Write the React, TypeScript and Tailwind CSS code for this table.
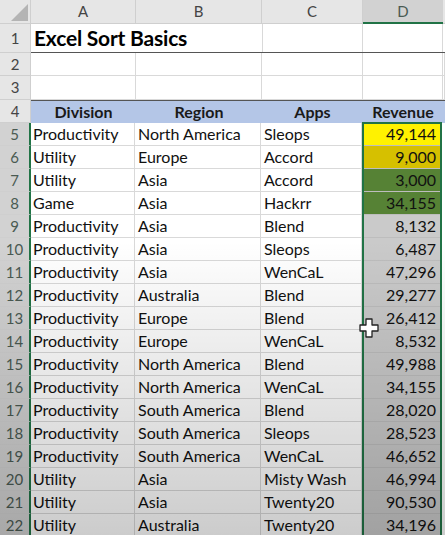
import React from 'react';

const FONT = { fontFamily: 'Lato, "Open Sans", "Liberation Sans", sans-serif' };

interface DataRow {
  division: string;
  region: string;
  app: string;
  revenue: string;
  fill: string;
}

const rows: DataRow[] = [
  { division: 'Productivity', region: 'North America', app: 'Sleops', revenue: '49,144', fill: 'bg-[#fff200]' },
  { division: 'Utility', region: 'Europe', app: 'Accord', revenue: '9,000', fill: 'bg-[#d6c000]' },
  { division: 'Utility', region: 'Asia', app: 'Accord', revenue: '3,000', fill: 'bg-[#568235]' },
  { division: 'Game', region: 'Asia', app: 'Hackrr', revenue: '34,155', fill: 'bg-[#568235]' },
  { division: 'Productivity', region: 'Asia', app: 'Blend', revenue: '8,132', fill: 'bg-[#cacaca]' },
  { division: 'Productivity', region: 'Asia', app: 'Sleops', revenue: '6,487', fill: 'bg-[#cacaca]' },
  { division: 'Productivity', region: 'Asia', app: 'WenCaL', revenue: '47,296', fill: 'bg-[#cacaca]' },
  { division: 'Productivity', region: 'Australia', app: 'Blend', revenue: '29,277', fill: 'bg-[#cacaca]' },
  { division: 'Productivity', region: 'Europe', app: 'Blend', revenue: '26,412', fill: 'bg-[#cacaca]' },
  { division: 'Productivity', region: 'Europe', app: 'WenCaL', revenue: '8,532', fill: 'bg-[#cacaca]' },
  { division: 'Productivity', region: 'North America', app: 'Blend', revenue: '49,988', fill: 'bg-[#cacaca]' },
  { division: 'Productivity', region: 'North America', app: 'WenCaL', revenue: '34,155', fill: 'bg-[#cacaca]' },
  { division: 'Productivity', region: 'South America', app: 'Blend', revenue: '28,020', fill: 'bg-[#cacaca]' },
  { division: 'Productivity', region: 'South America', app: 'Sleops', revenue: '28,523', fill: 'bg-[#cacaca]' },
  { division: 'Productivity', region: 'South America', app: 'WenCaL', revenue: '46,652', fill: 'bg-[#cacaca]' },
  { division: 'Utility', region: 'Asia', app: 'Misty Wash', revenue: '46,994', fill: 'bg-[#cacaca]' },
  { division: 'Utility', region: 'Asia', app: 'Twenty20', revenue: '90,530', fill: 'bg-[#cacaca]' },
  { division: 'Utility', region: 'Australia', app: 'Twenty20', revenue: '34,196', fill: 'bg-[#cacaca]' },
];

const cell = 'border-r border-b border-[#d9d9d9] h-full flex items-center overflow-hidden whitespace-nowrap';

const RowHead: React.FC<{ n: number; selected?: boolean }> = ({ n, selected }) => (
  <div
    className={`w-[31px] shrink-0 h-full flex items-center justify-center border-b border-[#cfcfcf] text-[15px] ${
      selected ? 'bg-[#d2d2d2] text-[#4a5a52] border-r-2 border-r-[#217346]' : 'bg-[#e6e6e6] text-[#444] border-r border-r-[#cfcfcf]'
    }`}
  >
    {n}
  </div>
);

const App: React.FC = () => {
  return (
    <div className="relative w-[445px] h-[535px] overflow-hidden bg-white text-black" style={FONT}>
      {/* column letters */}
      <div className="flex h-[24px] bg-[#e6e6e6] text-[15px] text-[#444]">
        <div className="w-[31px] shrink-0 border-r border-b border-[#cfcfcf] relative">
          <svg width="17" height="17" viewBox="0 0 17 17" className="absolute right-[2px] bottom-[2px]">
            <polygon points="17,0 17,17 0,17" fill="#b4b4b4" />
          </svg>
        </div>
        <div className="w-[105px] shrink-0 border-r border-b border-[#cfcfcf] flex items-center justify-center">A</div>
        <div className="w-[126px] shrink-0 border-r border-b border-[#cfcfcf] flex items-center justify-center">B</div>
        <div className="w-[101px] shrink-0 border-r border-b border-[#cfcfcf] flex items-center justify-center">C</div>
        <div className="w-[80px] shrink-0 bg-[#d2d2d2] border-b-2 border-[#217346] flex items-center justify-center text-[#4a5a52]">D</div>
        <div className="flex-1 border-b border-[#cfcfcf]" />
      </div>

      {/* row 1 - title */}
      <div className="flex h-[29px]">
        <RowHead n={1} />
        <div className="flex flex-1 border-b border-[#555]">
          <div className="w-[231px] shrink-0 h-full flex items-center pl-[3px] text-[21px] font-bold tracking-[-0.2px]">
            Excel Sort Basics
          </div>
          <div className={`${cell} w-[101px] border-b-0 border-l border-l-[#d9d9d9]`} />
          <div className={`${cell} w-[80px] border-b-0`} />
        </div>
      </div>

      {/* rows 2,3 */}
      {[2, 3].map((n) => (
        <div key={n} className={`flex ${n === 2 ? 'h-[23px]' : 'h-[24px]'}`}>
          <RowHead n={n} />
          <div className={`${cell} w-[105px]`} />
          <div className={`${cell} w-[126px]`} />
          <div className={`${cell} w-[101px]`} />
          <div className={`${cell} w-[80px]`} />
          <div className={`${cell} flex-1`} />
        </div>
      ))}

      {/* row 4 - headers */}
      <div className="flex h-[23px]">
        <RowHead n={4} />
        <div className="flex flex-1 bg-[#b4c6e7] border-t border-[#555] text-[16px] font-bold text-[#1a1a1a]">
          <div className="w-[105px] shrink-0 flex items-center justify-center">Division</div>
          <div className="w-[126px] shrink-0 flex items-center justify-center">Region</div>
          <div className="w-[101px] shrink-0 flex items-center justify-center">Apps</div>
          <div className="w-[80px] shrink-0 flex items-center justify-center">Revenue</div>
        </div>
      </div>

      {/* data rows */}
      {rows.map((r, i) => (
        <div key={i} className="flex h-[23px] text-[16px] text-[#111]">
          <RowHead n={i + 5} selected />
          <div className={`${cell} w-[104px] pl-[2px]`}>{r.division}</div>
          <div className={`${cell} w-[126px] pl-[3px]`}>{r.region}</div>
          <div className={`${cell} w-[101px] pl-[3px]`}>{r.app}</div>
          <div className={`w-[78px] shrink-0 h-full flex items-center justify-end pr-[4px] border-b border-[#bdbdbd] ${r.fill}`}>
            {r.revenue}
          </div>
          <div className="flex-1 bg-white" />
        </div>
      ))}

      {/* selection outline on D5:D22 */}
      <div className="absolute left-[362px] top-[122px] w-[80px] h-[420px] border-2 border-[#217346] pointer-events-none" />

      {/* darkening toward the bottom of the frame */}
      <div className="absolute inset-0 pointer-events-none bg-linear-to-b from-transparent from-45% to-black/20" />

      {/* fat cross cursor */}
      <svg width="20" height="20" viewBox="0 0 20 20" className="absolute left-[359px] top-[318px] pointer-events-none">
        <path d="M7 1h6v6h6v6h-6v6H7v-6H1V7h6z" fill="#fff" stroke="#222" strokeWidth="1.3" strokeLinejoin="round" />
      </svg>
    </div>
  );
};

export default App;
